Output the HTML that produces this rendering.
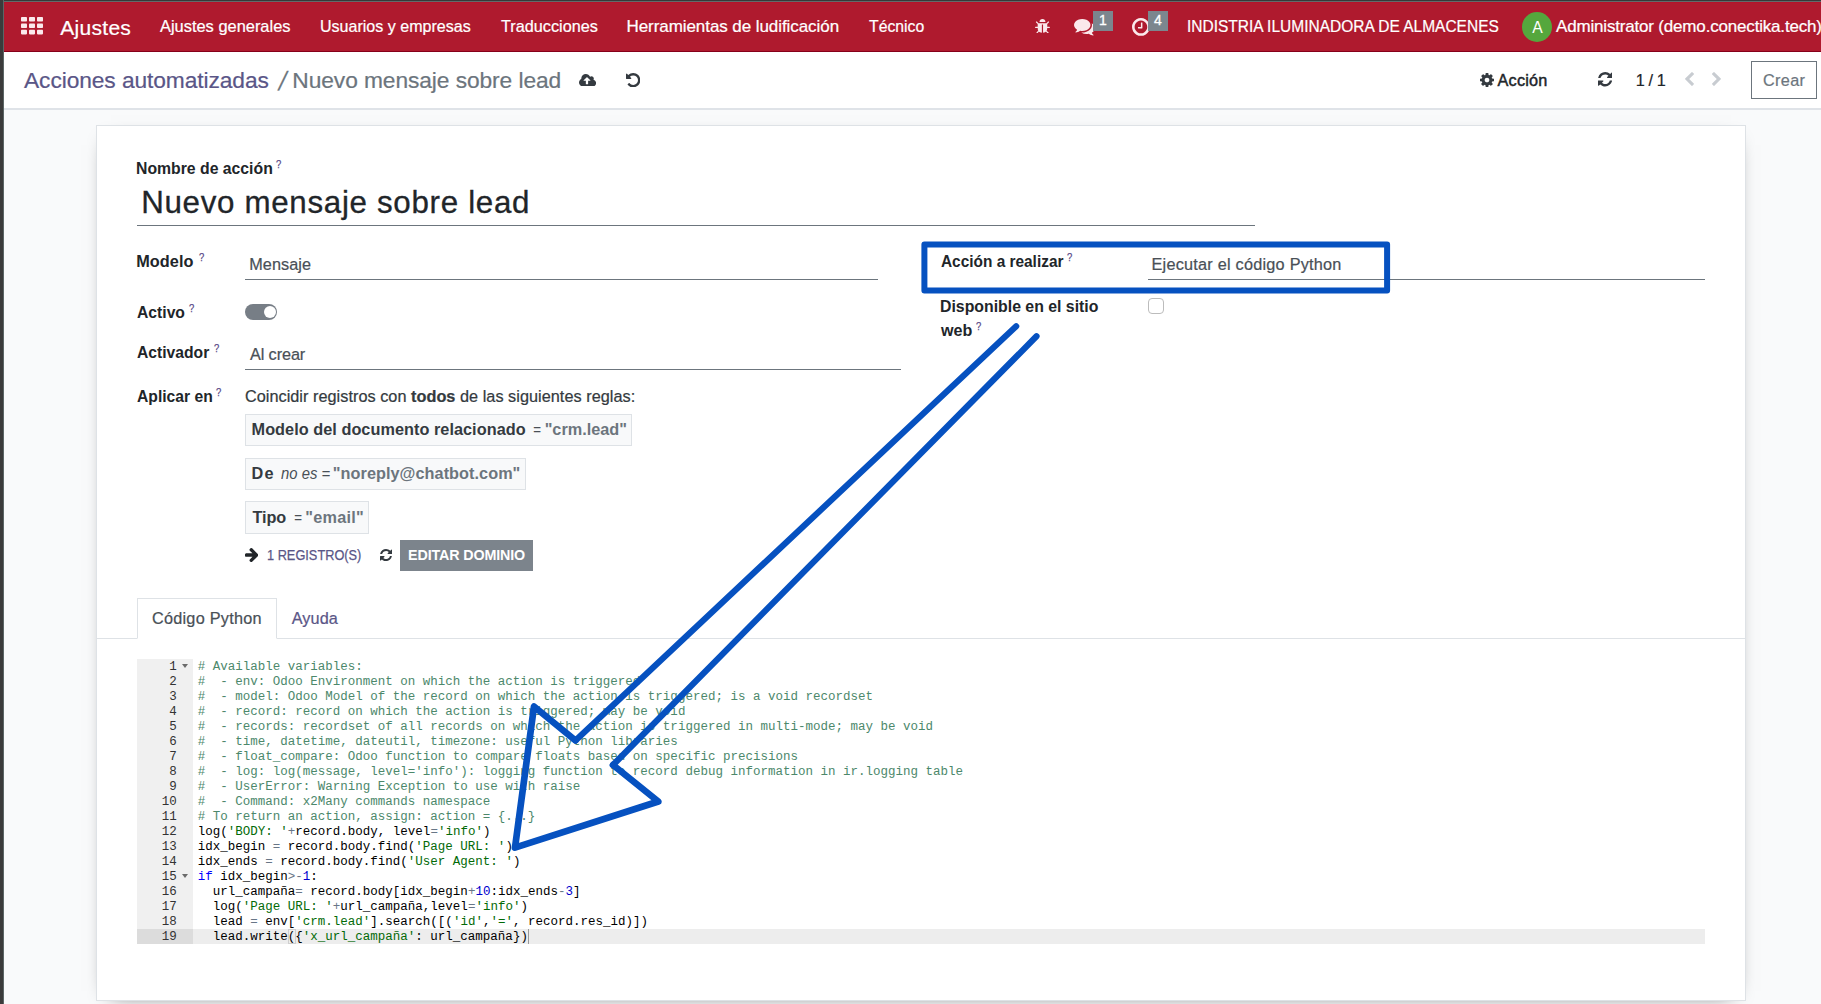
<!DOCTYPE html>
<html lang="es">
<head>
<meta charset="utf-8">
<title>Odoo - Nuevo mensaje sobre lead</title>
<style>
*{box-sizing:border-box;margin:0;padding:0}
html,body{width:1821px;height:1004px;overflow:hidden}
body{position:relative;background:#f9fafb;font-family:"Liberation Sans",sans-serif;color:#212529;font-size:16px}
.abs{position:absolute;white-space:nowrap}
#edge-l{left:0;top:0;width:4px;height:1004px;background:#3b3b3b;border-right:1px solid #5c6666}
#edge-t{left:0;top:0;width:1821px;height:2px;background:#383838;border-bottom:1px solid #626a6a}
#nav{left:4px;top:2px;width:1817px;height:50px;background:#af1a2e;border-top:1px solid #b5132a;border-bottom:1px solid #86001a}
.nv{color:#fff;font-size:17px;line-height:20px;top:17px}
#brand{color:#fff;font-size:21px;line-height:24px;top:15.700px;left:59.500px}
.badge{background:#7c868e;color:#fff;width:20px;height:20px;top:11px;font-size:14px;line-height:18px;text-align:center;-webkit-text-stroke:.3px #fff}
#cp{left:4px;top:52px;width:1817px;height:58px;background:#fff;border-bottom:2px solid #dfe3e8}
.bc{top:66px;font-size:22.750px;line-height:28px;color:#6c757d}
#sheet{left:96px;top:125px;width:1650px;height:876px;background:#fff;border:1px solid #dee2e6;box-shadow:0 5px 20px -15px #000}
.lb{font-weight:bold;font-size:16.250px;line-height:20px;color:#212529}
.q{color:#584887;font-size:11.500px;line-height:12px;margin-left:.3px;-webkit-text-stroke:.25px #584887;transform:scaleX(.82);transform-origin:0 0}
.val{font-size:16.250px;line-height:20px;color:#495057}
.ul{height:1px;background:#6c757d}
.dom{left:245px;height:32px;background:#f8f9fa;border:1px solid #dee2e6}
.dt{font-size:16.250px;line-height:20px}
.dt.k{font-weight:bold;color:#343a40}
.dt.o{font-style:italic;color:#495057}
.dt.v{font-weight:bold;color:#6c757d}
.ace{font-family:"Liberation Mono",monospace;font-size:12.5px;line-height:15px;white-space:pre}
.cm{color:#4c886b}.st{color:#036a07}.op{color:#687687}.nu{color:#0000cd}.kw{color:#0000ff}
.nv,#brand,.bc,.val,#v5,#t1,#t2,#crt,#pgr{-webkit-text-stroke-width:.22px}
/*FIT*/
#brand{letter-spacing:0.295px;margin-left:0.74px}
#n1{display:inline-block;transform-origin:0 50%;transform:scaleX(0.9654);margin-left:0.11px}
#n2{display:inline-block;transform-origin:0 50%;transform:scaleX(0.9437);margin-left:-0.16px}
#n3{display:inline-block;transform-origin:0 50%;transform:scaleX(0.9551);margin-left:0.31px}
#n4{letter-spacing:-0.071px;margin-left:0.02px}
#n5{display:inline-block;transform-origin:0 50%;transform:scaleX(0.9273);margin-left:0.02px}
#co{display:inline-block;transform-origin:0 50%;transform:scaleX(0.9118);margin-left:0.67px}
#us{letter-spacing:-0.180px}
#bc1{letter-spacing:-0.082px;margin-left:0.50px}
#bc3{letter-spacing:-0.079px;margin-left:0.37px}
#l1{display:inline-block;transform-origin:0 50%;transform:scaleX(0.9710);margin-left:-1.22px}
#title{letter-spacing:0.692px;margin-left:-0.34px}
#l2{letter-spacing:0.108px;margin-left:-0.88px}
#v2{letter-spacing:0.041px;margin-left:-0.71px}
#l3{display:inline-block;transform-origin:0 50%;transform:scaleX(0.9657);margin-left:-0.44px}
#l4{display:inline-block;transform-origin:0 50%;transform:scaleX(0.9638);margin-left:-0.44px}
#v4{letter-spacing:-0.091px;margin-left:-0.09px}
#l5{display:inline-block;transform-origin:0 50%;transform:scaleX(0.9641);margin-left:-0.44px}
#v5{letter-spacing:0.035px;margin-left:-0.09px}
#d1a{letter-spacing:0.045px;margin-left:-0.96px}
#d1c{letter-spacing:0.000px;margin-left:-0.85px}
#d2a{letter-spacing:1.113px;margin-left:-0.96px}
#d2b{display:inline-block;transform-origin:0 50%;transform:scaleX(0.9137);margin-left:-0.25px}
#d2c{letter-spacing:0.046px;margin-left:-0.65px}
#d3a{letter-spacing:-0.105px;margin-left:0.03px}
#d3c{letter-spacing:0.217px;margin-left:-0.67px}
#reg{display:inline-block;transform-origin:0 50%;transform:scaleX(0.8930);margin-left:-0.62px}
#edb{letter-spacing:-0.138px;margin-left:-0.44px}
#l6{display:inline-block;transform-origin:0 50%;transform:scaleX(0.9480);margin-left:-0.14px}
#v6{letter-spacing:0.233px;margin-left:-0.99px}
#l7{display:inline-block;transform-origin:0 50%;transform:scaleX(0.9747);margin-left:-1.23px}
#l8{display:inline-block;transform-origin:0 50%;transform:scaleX(0.9893);margin-left:0.16px}
#t1{letter-spacing:0.254px;margin-left:-0.59px}
#t2{letter-spacing:0.061px;margin-left:-0.24px}
#act{letter-spacing:0.165px;margin-left:0.11px}
#pgr{word-spacing:-0.745px;margin-left:-0.30px}
#crt{letter-spacing:0.335px;margin-left:-0.54px}
/*ENDFIT*/
</style>
</head>
<body>
<div class="abs" id="nav"></div>
<div class="abs" id="edge-t"></div>
<div class="abs" id="edge-l"></div>

<!-- navbar content -->
<svg class="abs" style="left:21px;top:17px" width="22" height="18" viewBox="0 0 22 18"><g fill="#fbe9ec"><rect x="0" y="0" width="6" height="4.6" rx=".8"/><rect x="8" y="0" width="6" height="4.6" rx=".8"/><rect x="16" y="0" width="6" height="4.6" rx=".8"/><rect x="0" y="6.4" width="6" height="4.6" rx=".8"/><rect x="8" y="6.4" width="6" height="4.6" rx=".8"/><rect x="16" y="6.4" width="6" height="4.6" rx=".8"/><rect x="0" y="12.8" width="6" height="4.6" rx=".8"/><rect x="8" y="12.8" width="6" height="4.6" rx=".8"/><rect x="16" y="12.8" width="6" height="4.6" rx=".8"/></g></svg>
<div class="abs" id="brand">Ajustes</div>
<div class="abs nv" id="n1" style="left:160px">Ajustes generales</div>
<div class="abs nv" id="n2" style="left:320.500px">Usuarios y empresas</div>
<div class="abs nv" id="n3" style="left:500.500px">Traducciones</div>
<div class="abs nv" id="n4" style="left:626.500px">Herramientas de ludificación</div>
<div class="abs nv" id="n5" style="left:868.500px">Técnico</div>
<div class="abs nv" id="co" style="left:1186px">INDISTRIA ILUMINADORA DE ALMACENES</div>
<div class="abs" style="left:1522.200px;top:11.800px;width:30px;height:30px;border-radius:50%;background:#55a73d"></div>
<div class="abs" style="left:1522.400px;top:12.500px;width:30px;color:#fff;font-size:15.700px;line-height:30px;text-align:center">A</div>
<div class="abs nv" id="us" style="left:1556px">Administrator (demo.conectika.tech)</div>

<!-- control panel -->
<div class="abs" id="cp"></div>
<div class="abs bc" id="bc1" style="left:23.500px;color:#5a5687">Acciones automatizadas</div>
<div class="abs bc" id="bc2" style="left:278.900px;top:67px;transform:skewX(-14deg) scaleY(1.16);transform-origin:50% 60%">/</div>
<div class="abs bc" id="bc3" style="left:292px">Nuevo mensaje sobre lead</div>
<div class="abs" id="act" style="left:1497.500px;top:70px;font-size:16.250px;line-height:20px;color:#212529;-webkit-text-stroke:.45px #212529">Acción</div>
<div class="abs" id="pgr" style="left:1636px;top:70px;font-size:16.250px;line-height:20px;color:#212529">1 / 1</div>
<div class="abs" style="left:1751px;top:61px;width:66px;height:38px;border:1px solid #6c757d;background:#fff"></div>
<div class="abs" id="crt" style="left:1763.500px;top:70px;color:#6c757d;font-size:16.250px;line-height:20px">Crear</div>

<!-- form sheet -->
<div class="abs" id="sheet"></div>

<!-- form fields : left column -->
<div class="abs lb" style="left:137px;top:158.100px"><span id="l1">Nombre de acción</span></div><div class="abs q" style="left:276px;top:158.300px">?</div>
<div class="abs" id="title" style="left:141.500px;top:183.900px;font-size:31.300px;line-height:38px;color:#212529;-webkit-text-stroke:.3px #212529">Nuevo mensaje sobre lead</div>
<div class="abs ul" style="left:137px;top:225px;width:1118px"></div>

<div class="abs lb" style="left:137px;top:251.100px"><span id="l2">Modelo</span></div><div class="abs q" style="left:198.500px;top:251.300px">?</div>
<div class="abs val" id="v2" style="left:250px;top:254.100px">Mensaje</div>
<div class="abs ul" style="left:245px;top:279px;width:633px"></div>

<div class="abs lb" style="left:137px;top:302.000px"><span id="l3">Activo</span></div><div class="abs q" style="left:188.500px;top:302.200px">?</div>
<div class="abs" style="left:245px;top:304px;width:32px;height:16px;border-radius:8px;background:#777e86"></div>
<div class="abs" style="left:263.500px;top:306px;width:12px;height:12px;border-radius:50%;background:#fff"></div>

<div class="abs lb" style="left:137px;top:341.800px"><span id="l4">Activador</span></div><div class="abs q" style="left:214px;top:342.000px">?</div>
<div class="abs val" id="v4" style="left:250px;top:344.100px">Al crear</div>
<div class="abs ul" style="left:245px;top:369px;width:656px"></div>

<div class="abs lb" style="left:137px;top:385.600px"><span id="l5">Aplicar en</span></div><div class="abs q" style="left:216px;top:385.800px">?</div>
<div class="abs" id="v5" style="left:245px;top:385.600px;font-size:16.250px;line-height:20px;color:#343a40">Coincidir registros con <b>todos</b> de las siguientes reglas:</div>

<div class="abs dom" style="top:414px;width:387px"></div>
<div class="abs dt k" id="d1a" style="left:252.500px;top:418.600px">Modelo del documento relacionado</div>
<div class="abs dt o" id="d1b" style="transform:scaleX(.83);transform-origin:0 0;left:532.700px;top:418.600px">=</div>
<div class="abs dt v" id="d1c" style="left:545.500px;top:418.600px">"crm.lead"</div>

<div class="abs dom" style="top:458px;width:281px"></div>
<div class="abs dt k" id="d2a" style="left:252.500px;top:463.000px">De</div>
<div class="abs dt o" id="d2b" style="left:281px;top:463.000px">no es =</div>
<div class="abs dt v" id="d2c" style="left:333.500px;top:463.000px">"noreply@chatbot.com"</div>

<div class="abs dom" style="top:501px;width:124px;height:33px"></div>
<div class="abs dt k" id="d3a" style="left:252.500px;top:506.900px">Tipo</div>
<div class="abs dt o" id="d3b" style="transform:scaleX(.83);transform-origin:0 0;left:293.800px;top:506.900px">=</div>
<div class="abs dt v" id="d3c" style="left:306px;top:506.900px">"email"</div>

<div class="abs" id="reg" style="-webkit-text-stroke:.25px #5a5687;left:268px;top:544.900px;font-size:14.300px;line-height:20px;color:#5a5687">1 REGISTRO(S)</div>
<div class="abs" style="left:400px;top:540px;width:133px;height:31px;background:#7c848c"></div>
<div class="abs" id="edb" style="left:408.500px;top:544.900px;color:#fff;font-size:14.300px;font-weight:bold;line-height:20px">EDITAR DOMINIO</div>

<!-- form fields : right column -->
<div class="abs lb" style="left:941px;top:251.100px"><span id="l6">Acción a realizar</span></div><div class="abs q" style="left:1067px;top:251.300px">?</div>
<div class="abs val" id="v6" style="left:1152.500px;top:254.100px">Ejecutar el código Python</div>
<div class="abs ul" style="left:1148px;top:279px;width:557px"></div>
<div class="abs lb" style="left:941px;top:296.000px"><span id="l7">Disponible en el sitio</span></div>
<div class="abs lb" style="left:940.500px;top:319.600px"><span id="l8">web</span></div><div class="abs q" style="left:976px;top:319.800px">?</div>
<div class="abs" style="left:1148px;top:298px;width:16px;height:16px;border:1px solid #bcbcbc;border-radius:4px;background:#fff"></div>

<!-- notebook tabs -->
<div class="abs" style="left:97px;top:638px;width:1648px;height:1px;background:#dee2e6"></div>
<div class="abs" style="left:137px;top:598px;width:140px;height:41px;background:#fff;border:1px solid #dee2e6;border-bottom-color:#fff"></div>
<div class="abs" id="t1" style="left:152.500px;top:608.000px;font-size:16.250px;line-height:20px;color:#495057">Código Python</div>
<div class="abs" id="t2" style="left:292px;top:608.000px;font-size:16.250px;line-height:20px;color:#5a5687">Ayuda</div>

<!-- ace editor -->
<div class="abs" id="gutter" style="left:137px;top:659px;width:56px;height:285px;background:#f0f0f0"></div>
<div class="abs" style="left:137px;top:929px;width:56px;height:15px;background:#dcdcdc"></div>
<div class="abs" style="left:193px;top:929px;width:1512px;height:15px;background:#ededed"></div>
<pre class="abs ace" id="lnum" style="left:137px;top:660.100px;width:39.700px;text-align:right;color:#333">1
2
3
4
5
6
7
8
9
10
11
12
13
14
15
16
17
18
19</pre>
<pre class="abs ace" id="code" style="left:197.800px;top:660.100px;color:#000"><span class="cm"># Available variables:</span>
<span class="cm">#  - env: Odoo Environment on which the action is triggered</span>
<span class="cm">#  - model: Odoo Model of the record on which the action is triggered; is a void recordset</span>
<span class="cm">#  - record: record on which the action is triggered; may be void</span>
<span class="cm">#  - records: recordset of all records on which the action is triggered in multi-mode; may be void</span>
<span class="cm">#  - time, datetime, dateutil, timezone: useful Python libraries</span>
<span class="cm">#  - float_compare: Odoo function to compare floats based on specific precisions</span>
<span class="cm">#  - log: log(message, level='info'): logging function to record debug information in ir.logging table</span>
<span class="cm">#  - UserError: Warning Exception to use with raise</span>
<span class="cm">#  - Command: x2Many commands namespace</span>
<span class="cm"># To return an action, assign: action = {...}</span>
log(<span class="st">'BODY: '</span><span class="op">+</span>record.body, level<span class="op">=</span><span class="st">'info'</span>)
idx_begin <span class="op">=</span> record.body.find(<span class="st">'Page URL: '</span>)
idx_ends <span class="op">=</span> record.body.find(<span class="st">'User Agent: '</span>)
<span class="kw">if</span> idx_begin<span class="op">&gt;-</span><span class="nu">1</span>:
  url_campaña<span class="op">=</span> record.body[idx_begin<span class="op">+</span><span class="nu">10</span>:idx_ends<span class="op">-</span><span class="nu">3</span>]
  log(<span class="st">'Page URL: '</span><span class="op">+</span>url_campaña,level<span class="op">=</span><span class="st">'info'</span>)
  lead <span class="op">=</span> env[<span class="st">'crm.lead'</span>].search([(<span class="st">'id'</span>,<span class="st">'='</span>, record.res_id)])
  lead.write({<span class="st">'x_url_campaña'</span>: url_campaña})</pre>
<div class="abs" style="left:182px;top:664px;width:0;height:0;border-left:3.5px solid transparent;border-right:3.5px solid transparent;border-top:4px solid #6b6b6b"></div>
<div class="abs" style="left:182px;top:874px;width:0;height:0;border-left:3.5px solid transparent;border-right:3.5px solid transparent;border-top:4px solid #6b6b6b"></div>
<div class="abs" style="left:288px;top:929px;width:7.500px;height:15px;border:1px solid #cfcfcf"></div>
<div class="abs" style="left:528px;top:929px;width:1px;height:15px;background:#9a9a9a"></div>
<!-- icons -->
<svg class="abs" style="left:1034.82px;top:18.77px" width="14.95" height="14.65" viewBox="96 64 1600 1568"><path fill="#fbe9ec" d="M1696 960q0 26-19 45t-45 19h-224q0 171-67 290l208 209q19 19 19 45t-19 45q-18 19-45 19t-45-19l-198-197q-5 5-15 13t-42 28.500-65 36.500-82 29-97 13v-896h-128v896q-51 0-101.500-13.500t-87-33-66-39-43.500-32.500l-15-14-183 207q-20 21-48 21-24 0-43-16-19-18-20.500-44.500t15.500-46.500l202-227q-58-114-58-274h-224q-26 0-45-19t-19-45 19-45 45-19h224v-294l-173-173q-19-19-19-45t19-45 45-19 45 19l173 173h844l173-173q19-19 45-19t45 19 19 45-19 45l-173 173v294h224q26 0 45 19t19 45zm-480-576h-640q0-133 93.500-226.500t226.500-93.500 226.500 93.500 93.500 226.500z"/></svg>
<svg class="abs" style="left:1074.20px;top:19.45px" width="20.99" height="16.49" viewBox="0 256 1792 1408.11"><path fill="#fbe9ec" d="M1408 768q0 139-94 257t-256.500 186.500-353.500 68.500q-86 0-176-16-124 88-278 128-36 9-86 16h-3q-11 0-20.500-8t-11.500-21q-1-3-1-6.500t.5-6.500 2-6l2.500-5 3.500-5.500 4-5 4.500-5 4-4.500q5-6 23-25t26-29.500 22.500-29 25-38.500 20.500-44q-124-72-195-177t-71-224q0-139 94-257t256.500-186.500 353.500-68.500 353.500 68.500 256.500 186.500 94 257zm384 256q0 120-71 224.500t-195 176.500q10 24 20.500 44t25 38.500 22.500 29 26 29.500 23 25q1 1 4 4.500t4.500 5 4 5 3.500 5.500l2.500 5 2 6 .5 6.500-1 6.500q-3 14-13 22t-22 7q-50-7-86-16-154-40-278-128-90 16-176 16-271 0-472-132 58 4 88 4 161 0 309-45t264-129q125-92 192-212t67-254q0-77-23-152 129 71 204 178t75 230z"/></svg>
<svg class="abs" style="left:1132.18px;top:17.82px" width="17.85" height="17.85" viewBox="128 128 1536 1536"><path fill="#fbe9ec" d="M1024 544v448q0 14-9 23t-23 9h-320q-14 0-23-9t-9-23v-64q0-14 9-23t23-9h224v-352q0-14 9-23t23-9h64q14 0 23 9t9 23zm416 352q0-148-73-273t-198-198-273-73-273 73-198 198-73 273 73 273 198 198 273 73 273-73 198-198 73-273zm224 0q0 209-103 385.500t-279.500 279.500-385.500 103-385.500-103-279.500-279.500-103-385.500 103-385.500 279.500-279.500 385.500-103 385.500 103 279.500 279.500 103 385.500z"/></svg>
<svg class="abs" style="left:579.10px;top:73.83px" width="17.10" height="12.54" viewBox="-64 128 1920 1408"><path fill="#343a40" d="M1216 864q0-14-9-23l-352-352q-9-9-23-9t-23 9l-351 351q-10 12-10 24 0 14 9 23t23 9h224v352q0 13 9.500 22.500t22.500 9.500h192q13 0 22.500-9.500t9.500-22.500v-352h224q13 0 22.500-9.500t9.500-22.500zm640 288q0 159-112.500 271.500t-271.500 112.500h-1088q-185 0-316.500-131.500t-131.500-316.500q0-130 70-240t188-165q-2-30-2-43 0-212 150-362t362-150q156 0 285.500 87t188.500 231q71-62 166-62 106 0 181 75t75 181q0 76-41 138 130 31 213.500 135.500t83.500 238.500z"/></svg>
<svg class="abs" style="left:625.53px;top:73.07px" width="14.35" height="14.35" viewBox="128 128 1536 1536"><path fill="#343a40" d="M1664 896q0 156-61 298t-164 245-245 164-298 61q-172 0-327-72.500t-264-204.500q-7-10-6.500-22.500t8.500-20.500l137-138q10-9 25-9 16 2 23 12 73 95 179 147t225 52q104 0 198.500-40.500t163.500-109.500 109.500-163.500 40.500-198.500-40.500-198.500-109.500-163.500-163.500-109.500-198.500-40.500q-98 0-188 35.500t-160 101.500l137 138q31 30 14 69-17 40-59 40h-448q-26 0-45-19t-19-45v-448q0-42 40-59 39-17 69 14l130 129q107-101 244.500-156.500t284.500-55.500q156 0 298 61t245 164 164 245 61 298z"/></svg>
<svg class="abs" style="left:1479.75px;top:72.75px" width="14.00" height="14.00" viewBox="128 128 1536 1536"><path fill="#343a40" d="M1152 896q0-106-75-181t-181-75-181 75-75 181 75 181 181 75 181-75 75-181zm512-109v222q0 12-8 23t-20 13l-185 28q-19 54-39 91 35 50 107 138 10 12 10 25t-9 23q-27 37-99 108t-94 71q-12 0-26-9l-138-108q-44 23-91 38-16 136-29 186-7 28-36 28h-222q-14 0-24.500-8.500t-11.500-21.500l-28-184q-49-16-90-37l-141 107q-10 9-25 9-14 0-25-11-126-114-165-168-7-10-7-23 0-12 8-23 15-21 51-66.500t54-70.500q-27-50-41-99l-183-27q-13-2-21-12.500t-8-23.500v-222q0-12 8-23t19-13l186-28q14-46 39-92-40-57-107-138-10-12-10-24 0-10 9-23 26-36 98.500-107.500t94.500-71.500q13 0 26 10l138 107q44-23 91-38 16-136 29-186 7-28 36-28h222q14 0 24.500 8.500t11.500 21.500l28 184q49 16 90 37l142-107q9-9 24-9 13 0 25 10 129 119 165 170 7 8 7 22 0 12-8 23-15 21-51 66.500t-54 70.500q26 50 41 98l183 28q13 2 21 12.500t8 23.500z"/></svg>
<svg class="abs" style="left:1597.80px;top:72.30px" width="14.40" height="14.40" viewBox="128 128 1536 1536"><path fill="#343a40" d="M1639 1056q0 5-1 7-64 268-268 434.500t-478 166.500q-146 0-282.500-55t-243.500-157l-129 129q-19 19-45 19t-45-19-19-45v-448q0-26 19-45t45-19h448q26 0 45 19t19 45-19 45l-137 137q71 66 161 102t187 36q134 0 250-65t186-179q11-17 53-117 8-23 30-23h192q13 0 22.500 9.500t9.500 22.500zm25-800v448q0 26-19 45t-45 19h-448q-26 0-45-19t-19-45 19-45l138-138q-148-137-349-137-134 0-250 65t-186 179q-11 17-53 117-8 23-30 23h-199q-13 0-22.500-9.500t-9.500-22.500v-7q65-268 270-434.500t480-166.500q146 0 284 55.500t245 156.500l130-129q19-19 45-19t45 19 19 45z"/></svg>
<svg class="abs" style="left:1684.92px;top:72.07px" width="8.97" height="13.95" viewBox="410 26 1036 1612"><path fill="#c8ccd1" d="M1427 301l-531 531 531 531q19 19 19 45t-19 45l-166 166q-19 19-45 19t-45-19l-742-742q-19-19-19-45t19-45l742-742q19-19 45-19t45 19l166 166q19 19 19 45t-19 45z"/></svg>
<svg class="abs" style="left:1711.82px;top:72.07px" width="8.97" height="13.95" viewBox="346 26 1036 1612"><path fill="#c8ccd1" d="M1363 877l-742 742q-19 19-45 19t-45-19l-166-166q-19-19-19-45t19-45l531-531-531-531q-19-19-19-45t19-45l166-166q19-19 45-19t45 19l742 742q19 19 19 45t-19 45z"/></svg>
<svg class="abs" style="left:244.80px;top:547.80px" width="13.41" height="14.19" viewBox="128 181 1472 1558"><path fill="#212529" d="M1600 960q0 54-37 91l-651 651q-39 37-91 37-51 0-90-37l-75-75q-38-38-38-91t38-91l293-293h-704q-52 0-84.500-37.500t-32.500-90.500v-128q0-53 32.500-90.500t84.500-37.500h704l-293-294q-38-36-38-90t38-90l75-75q38-38 90-38 53 0 91 38l651 651q37 35 37 90z"/></svg>
<svg class="abs" style="left:379.50px;top:548.90px" width="12.10" height="12.10" viewBox="128 128 1536 1536"><path fill="#343a40" d="M1639 1056q0 5-1 7-64 268-268 434.500t-478 166.500q-146 0-282.500-55t-243.500-157l-129 129q-19 19-45 19t-45-19-19-45v-448q0-26 19-45t45-19h448q26 0 45 19t19 45-19 45l-137 137q71 66 161 102t187 36q134 0 250-65t186-179q11-17 53-117 8-23 30-23h192q13 0 22.500 9.500t9.500 22.500zm25-800v448q0 26-19 45t-45 19h-448q-26 0-45-19t-19-45 19-45l138-138q-148-137-349-137-134 0-250 65t-186 179q-11 17-53 117-8 23-30 23h-199q-13 0-22.500-9.500t-9.500-22.500v-7q65-268 270-434.500t480-166.500q146 0 284 55.500t245 156.500l130-129q19-19 45-19t45 19 19 45z"/></svg>
<!-- counters over icons -->
<div class="abs badge" style="left:1093px">1</div>
<div class="abs badge" style="left:1148px">4</div>
<!-- annotations -->
<svg class="abs" style="left:0;top:0" width="1821" height="1004" viewBox="0 0 1821 1004">
<rect x="924.400" y="244.400" width="462.700" height="46.200" fill="none" stroke="#0651c0" stroke-width="6" stroke-linejoin="round"/>
<g fill="none" stroke="#0651c0" stroke-linecap="round" stroke-linejoin="round">
<path stroke-width="6.200" d="M1016.200 326.300L575.500 740.500M613 765L1036.500 336.300"/>
<path stroke-width="6.700" d="M575.500 740.500L534 706.500L515 847.600L658.300 801.500L613 765"/>
</g>
</svg>

</body>
</html>
